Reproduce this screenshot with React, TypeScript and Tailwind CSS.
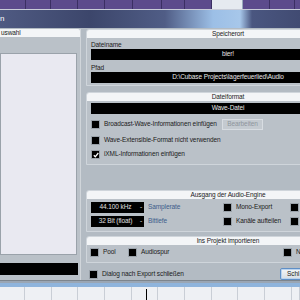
import React from "react";

const font = { fontFamily: '"Liberation Sans", Arial, sans-serif' };

const Box = ({ checked = false }: { checked?: boolean }) => (
  <span className="flex h-[7px] w-[7px] shrink-0 items-center justify-center bg-black outline outline-1 outline-[#9aa2aa]">
    {checked && (
      <svg width="6" height="6" viewBox="0 0 6 6">
        <path d="M0.8 3.2 L2.3 4.8 L5.3 1" stroke="white" strokeWidth="1.3" fill="none" />
      </svg>
    )}
  </span>
);

const Check = ({ label, checked = false }: { label: string; checked?: boolean }) => (
  <div className="flex items-center gap-[5px] whitespace-nowrap">
    <Box checked={checked} />
    <span>{label}</span>
  </div>
);

const Section = ({ title, children, className = "" }: { title: string; children?: React.ReactNode; className?: string }) => (
  <div className={`flex flex-col rounded-t-[3px] border border-[#cfd5db] bg-[#bac1c8] ${className}`}>
    <div className="flex h-[8px] items-center justify-center rounded-t-[2px] bg-[#f3f5f7] leading-none text-[#222]">
      {title}
    </div>
    {children}
  </div>
);

const Field = ({ text }: { text: string }) => (
  <div className="mx-[3px] flex h-[11px] items-center justify-center bg-black leading-none text-[#e8e8e8]">{text}</div>
);

export default function App() {
  const topCells = [26, 25, 27, 27, 28, 29, 23, 27];
  const rulerCells = [25, 27, 26, 27, 27, 26, 27, 27, 26, 27, 27, 8];
  return (
    <div
      className="relative h-[300px] w-[300px] overflow-hidden bg-[#b3bbc3] text-[6.5px] tracking-[-0.1px] text-[#1a1a1a]"
      style={font}
    >
      {/* purple arrange strip */}
      <div className="flex h-[9px] bg-[#574785]">
        {topCells.map((w, i) => (
          <div key={i} className="h-full shrink-0 border-r border-[#3b2f63] bg-[#5c4b8c]" style={{ width: w }} />
        ))}
        <div className="h-full w-[31px] shrink-0 border-r border-[#9ab] bg-[#e6eaf0]" />
        <div className="h-full w-[27px] shrink-0 border-r border-[#3b2f63] bg-[#5c4b8c]" />
        <div className="h-full w-[25px] shrink-0 border-r border-[#3b2f63] bg-[#5c4b8c]" />
        <div className="h-full flex-1 bg-[#5c4b8c]" />
      </div>
      <div className="h-[1px] bg-[#c8ccd8]" />
      {/* title bar */}
      <div className="flex h-[18px] items-center bg-[linear-gradient(90deg,#4f5a82_0%,#3c466b_30%,#505d86_55%,#9cbfe6_71%,#a7c7ea_80%,#4a5680_84%,#414b72_100%)] text-[8px] leading-none text-white">
        <span>n</span>
      </div>
      {/* dialog body */}
      <div className="flex h-[253px] gap-[5px] border-b border-[#7d858d] pt-[1px]">
        {/* left column */}
        <div className="flex w-[81px] shrink-0 flex-col border-r border-[#d0d5da] bg-[#bac1c8]">
          <div className="flex h-[8px] items-center rounded-tr-[2px] bg-[#f3f5f7] leading-none">
            <span className="pl-[1px]">uswahl</span>
          </div>
          <div className="mt-[16px] h-[202px] w-[77px] border border-[#9aa2aa] bg-[#e9e9f1]" />
          <div className="mt-[8px] h-[12px] w-[78px] bg-black" />
        </div>
        {/* right column */}
        <div className="flex w-[284px] shrink-0 flex-col">
          <Section title="Speicherort" className="h-[57px]">
            <div className="px-[1px] pt-[2px] leading-none">
              <div className="h-[9px] pl-[3px] pt-[2px]">Dateiname</div>
              <Field text="bier!" />
              <div className="h-[12px] pl-[3px] pt-[5px]">Pfad</div>
              <Field text="D:\Cubase Projects\lagerfeuerlied\Audio" />
            </div>
          </Section>
          <Section title="Dateiformat" className="mt-[6px] h-[73px]">
            <div className="flex flex-col px-[1px] pt-[2px] leading-none">
              <Field text="Wave-Datei" />
              <div className="mt-[5px] flex flex-col gap-[7px] pl-[4px]">
                <div className="flex h-[11px] items-center">
                  <div className="w-[130px]">
                    <Check label="Broadcast-Wave-Informationen einfügen" />
                  </div>
                  <div className="flex h-[11px] w-[41px] items-center justify-center border border-[#d8dde2] bg-[#c4cad0] text-[#8e959c]">
                    Bearbeiten
                  </div>
                </div>
                <Check label="Wave-Extensible-Format nicht verwenden" />
                <Check label="iXML-Informationen einfügen" checked />
              </div>
            </div>
          </Section>
          <Section title="Ausgang der Audio-Engine" className="mt-[25px] h-[42px]">
            <div className="flex px-[4px] pt-[3px] leading-none">
              <div className="flex w-[133px] flex-col gap-[3px]">
                {[
                  ["44.100 kHz", "Samplerate"],
                  ["32 Bit (float)", "Bittiefe"],
                ].map(([v, l]) => (
                  <div key={l} className="flex items-center gap-[4px]">
                    <div className="flex h-[11px] w-[53px] items-center bg-black text-[#e0e0e0]">
                      <span className="flex-1 text-center">{v}</span>
                      <span className="pr-[2px]">-</span>
                    </div>
                    <span className="text-[#3d5c8a]">{l}</span>
                  </div>
                ))}
              </div>
              <div className="flex w-[67px] flex-col gap-[7px] pt-[2px]">
                <Check label="Mono-Export" />
                <Check label="Kanäle aufteilen" />
              </div>
              <div className="flex flex-col gap-[7px] pt-[2px]">
                <Box />
                <Box />
              </div>
            </div>
          </Section>
          <Section title="Ins Projekt importieren" className="mt-[4px] h-[27px]">
            <div className="flex items-center px-[4px] pt-[4px] leading-none">
              <div className="w-[38px]">
                <Check label="Pool" />
              </div>
              <div className="w-[155px]">
                <Check label="Audiospur" />
              </div>
              <Check label="Ne" />
            </div>
          </Section>
          <div className="mt-[5px] flex items-center pl-[4px] leading-none">
            <div className="w-[190px]">
              <Check label="Dialog nach Export schließen" />
            </div>
            <div className="flex h-[12px] w-[60px] items-center rounded-[2px] border border-[#5f8fc6] bg-[linear-gradient(#f4f6f8,#d7dde3)] pl-[6px] shadow-[inset_0_0_0_1px_#b9d3ef]">
              Schl
            </div>
          </div>
        </div>
      </div>
      {/* below dialog */}
      <div className="h-[2px] bg-[#9aa6b4]" />
      <div className="h-[4px] bg-[#8fb4dc]" />
      <div className="relative flex h-[13px] bg-[#eef0f4]">
        {rulerCells.map((w, i) => (
          <div key={i} className="h-full shrink-0 border-r border-[#c9ced6]" style={{ width: w }} />
        ))}
        <div className="absolute left-[146px] top-[2px] h-[11px] w-[1px] bg-black" />
      </div>
    </div>
  );
}
